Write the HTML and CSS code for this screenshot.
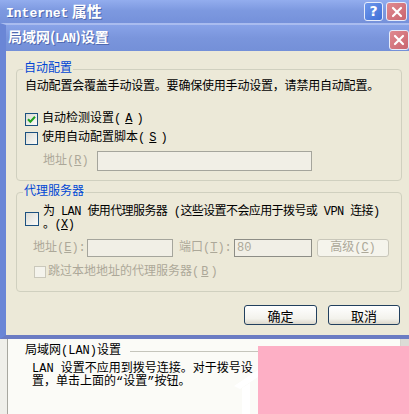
FILE: index.html
```html
<!DOCTYPE html>
<html lang="zh-CN">
<head>
    <meta charset="UTF-8">
    <meta name="viewport" content="width=device-width, initial-scale=1.0">
    <title>局域网(LAN)设置</title>
    <link rel="stylesheet" href="styles.css">
</head>
<body>
    <div class="win-title">
        <span class="title-text"><span class="latin">Internet</span> 属性</span>
        <div class="title-btns">
            <span class="tbtn help">?</span>
            <span class="tbtn close">
                <svg width="12" height="12" viewBox="0 0 12 12"><path d="M2 2L10 10M10 2L2 10" stroke="#fff" stroke-width="2.2" stroke-linecap="round"/></svg>
            </span>
        </div>
    </div>

    <div class="dialog">
        <div class="dlg-title">
            <span class="title-text small">局域网(<span class="latin">LAN</span>)设置</span>
            <span class="tbtn close">
                <svg width="12" height="12" viewBox="0 0 12 12"><path d="M2 2L10 10M10 2L2 10" stroke="#fff" stroke-width="2.2" stroke-linecap="round"/></svg>
            </span>
        </div>
        <div class="dlg-body">
            <fieldset class="group">
                <legend>自动配置</legend>
                <p class="note">自动配置会覆盖手动设置。要确保使用手动设置，请禁用自动配置。</p>
                <label class="check-row first">
                    <span class="box">
                        <svg width="11" height="11" viewBox="0 0 11 11"><path d="M2 5.2L4.4 7.8L9 2.8" fill="none" stroke="#21a121" stroke-width="2"/></svg>
                    </span>
                    自动检测设置(<u>A</u>)
                </label>
                <label class="check-row second"><span class="box"></span>使用自动配置脚本(<u>S</u>)</label>
                <div class="field-row script-row">
                    <span class="dim lbl-script">地址(<u>R</u>)</span>
                    <span class="input script-input"></span>
                </div>
            </fieldset>

            <fieldset class="group proxy">
                <legend>代理服务器</legend>
                <label class="check-row multi">
                    <span class="box big"></span>
                    <span class="multi-text">为 LAN 使用代理服务器 (这些设置不会应用于拨号或 VPN 连接)<br>。(<u>X</u>)</span>
                </label>
                <div class="field-row proxy-row">
                    <span class="dim lbl-addr">地址(<u>E</u>):</span>
                    <span class="input addr-input"></span>
                    <span class="dim lbl-port">端口(<u>T</u>):</span>
                    <span class="input port-input">80</span>
                    <span class="btn off adv-btn">高级(<u>C</u>)</span>
                </div>
                <label class="check-row dim bypass"><span class="box off"></span>跳过本地地址的代理服务器(<u>B</u>)</label>
            </fieldset>

            <div class="actions">
                <span class="btn ok-btn">确定</span>
                <span class="btn">取消</span>
            </div>
        </div>
    </div>

    <div class="under">
        <div class="under-side"></div>
        <div class="under-main">
            <div class="under-legend">局域网(LAN)设置</div>
            <p>LAN 设置不应用到拨号连接。对于拨号设<br>置，单击上面的“设置”按钮。</p>
        </div>
        <div class="under-scroll"><span class="scroll-cap"></span></div>
        <svg class="watermark" width="30" height="46" viewBox="0 0 30 46">
            <path d="M4 18L28 2L28 9L10 21Z" fill="#fff"/>
            <path d="M12 20L20 15L20 46L12 46Z" fill="#fff"/>
        </svg>
        <div class="pink"></div>
    </div>
</body>
</html>
```

FILE: styles.css
```css
body {
    margin: 0;
    width: 409px;
    height: 414px;
    overflow: hidden;
    background: #fbfbf7;
    font-family: "Liberation Mono", "Noto Sans CJK SC", monospace;
    font-size: 12px;
    line-height: 13px;
    color: #000;
}
p {
    margin: 0;
}

/* title bars */
.win-title {
    height: 23px;
    display: flex;
    align-items: center;
    justify-content: space-between;
    padding: 0 2px 0 6px;
    background: linear-gradient(#93adee, #7d99e0 45%, #7591da);
}
.title-text {
    color: #fff;
    font-family: "Noto Sans CJK SC", sans-serif;
    font-size: 15px;
    font-weight: bold;
    text-shadow: 1px 1px 0 #5069b0;
}
.title-text .latin {
    font-family: "Liberation Mono", monospace;
    font-size: 13px;
}
.title-text.small {
    font-size: 14px;
}
.title-text.small .latin {
    font-size: 12px;
    letter-spacing: -0.5px;
}
.title-btns {
    display: flex;
    gap: 3px;
}
.tbtn {
    width: 19px;
    height: 19px;
    box-sizing: border-box;
    border: 1px solid #e6ecfa;
    border-radius: 3px;
    display: flex;
    align-items: center;
    justify-content: center;
    color: #fff;
    font-family: "DejaVu Sans", sans-serif;
    font-weight: bold;
    font-size: 14px;
}
.tbtn.help {
    background: linear-gradient(135deg, #6f98ec, #3f6fd6);
}
.tbtn.close {
    width: 21px;
    background: linear-gradient(135deg, #e08a90, #c9656f);
}

.dialog {
    border-top: 2px solid #a9bcef;
    border-left: 6px solid #6a86d6;
    border-bottom: 4px solid #6b7cc3;
}
.dlg-title {
    height: 26px;
    display: flex;
    align-items: center;
    justify-content: space-between;
    padding-left: 2px;
    background: linear-gradient(#88a3e8, #7a95dc 50%, #7490d8);
}
.dlg-title .tbtn.close {
    width: 20px;
    height: 20px;
    margin-top: 4px;
}

/* dialog body */
.dlg-body {
    height: 284px;
    box-sizing: border-box;
    padding: 12px 7px 0 10px;
    background: #ece9d8;
}
.group {
    margin: 0;
    min-width: 0;
    padding: 0 0 9px 8px;
    border: 1px solid #d0d0bf;
    border-radius: 4px;
}
.group legend {
    color: #0046d5;
    padding: 0 1px;
    margin-left: -2px;
    line-height: 13px;
}
.group.proxy {
    margin-top: 5px;
    padding-bottom: 11px;
}
.note {
    margin-top: 5px;
    letter-spacing: -0.2px;
    white-space: nowrap;
}
.check-row {
    display: flex;
    align-items: center;
    gap: 4px;
    height: 16px;
    white-space: nowrap;
}
.check-row.first {
    margin-top: 17px;
}
.check-row.second {
    margin-top: 3px;
}
.check-row.multi {
    height: auto;
    margin-top: 7px;
}
.multi-text {
    letter-spacing: -0.6px;
}
.check-row.bypass {
    margin-top: 7px;
    padding-left: 9px;
    gap: 2px;
}
.box {
    width: 13px;
    height: 13px;
    box-sizing: border-box;
    border: 1px solid #1c5180;
    background: linear-gradient(135deg, #dcdcd5, #fbfbf9);
    display: flex;
    align-items: center;
    justify-content: center;
    flex: none;
}
.box.big {
    width: 14px;
    height: 14px;
}
.box.off {
    width: 12px;
    height: 12px;
    border-color: #cac8bb;
    background: #f4f3ec;
}
.dim {
    color: #aca899;
}

.field-row {
    display: flex;
    align-items: center;
    white-space: nowrap;
}
.script-row {
    margin-top: 5px;
    height: 20px;
    padding-left: 18px;
}
.lbl-script {
    width: 54px;
}
.input {
    height: 20px;
    box-sizing: border-box;
    border: 1px solid #a5a59c;
    background: #f1efe6;
    color: #aca899;
    padding-left: 2px;
    line-height: 18px;
}
.script-input {
    width: 215px;
}
.proxy-row {
    margin-top: 7px;
    height: 18px;
    padding-left: 8px;
}
.proxy-row .input {
    height: 18px;
    line-height: 16px;
}
.lbl-addr {
    width: 54px;
}
.addr-input {
    width: 86px;
}
.lbl-port {
    width: 55px;
    margin-left: 6px;
}
.port-input {
    width: 78px;
    border-color: #8d8d86;
}

/* buttons */
.btn {
    height: 20px;
    width: 72px;
    box-sizing: border-box;
    border: 1px solid #22405e;
    border-radius: 3px;
    background: linear-gradient(#ffffff, #f3f2ec 70%, #dcd8cb);
    display: flex;
    align-items: center;
    justify-content: center;
    font-family: "Noto Sans CJK SC", sans-serif;
    font-size: 13px;
}
.btn.off {
    border-color: #c9c7ba;
    background: #f5f4ec;
    color: #aca899;
    font-family: "Liberation Mono", "Noto Sans CJK SC", monospace;
    font-size: 12px;
}
.adv-btn {
    margin-left: 5px;
    height: 18px;
}
.actions {
    display: flex;
    justify-content: flex-end;
    gap: 11px;
    margin-top: 13px;
    padding-right: 2px;
}
.ok-btn {
    width: 73px;
}

/* page behind the dialog */
.under {
    position: relative;
    display: flex;
    height: 75px;
}
.under-side {
    width: 7px;
    background: #efefea;
    border-right: 1px solid #a7a7a0;
}
.under-main {
    flex: 1;
    padding: 6px 0 0 17px;
}
.under-legend {
    display: flex;
    align-items: center;
    line-height: 12px;
    white-space: nowrap;
}
.under-legend::after {
    content: "";
    flex: 1;
    border-top: 1px solid #c5c5bc;
    margin-left: 9px;
}
.under-main p {
    margin: 6px 0 0 7px;
    line-height: 13px;
    white-space: nowrap;
}
.under-scroll {
    width: 8px;
    border-left: 1px solid #d4d4cc;
    background: #f6f6f2;
}
.scroll-cap {
    display: block;
    height: 8px;
    background: #dcdcd6;
}
.watermark {
    position: absolute;
    left: 230px;
    top: 29px;
}
.pink {
    position: absolute;
    left: 258px;
    top: 7px;
    right: 0;
    bottom: 0;
    background: #fdafc5;
}
```
